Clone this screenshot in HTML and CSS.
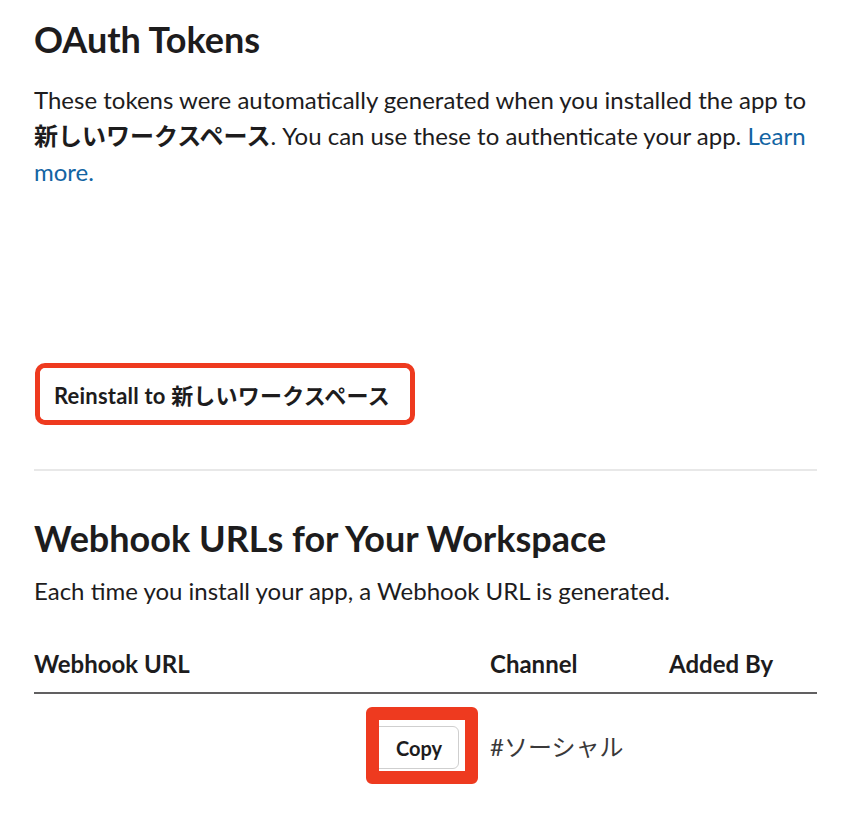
FILE: index.html
```html
<!DOCTYPE html>
<html lang="en">
<head>
<meta charset="utf-8">
<link rel="stylesheet" href="styles.css">
</head>
<body>
<main class="page">
  <section class="oauth">
    <h2 class="title">OAuth Tokens</h2>
    <p class="desc">These tokens were automatically generated when you installed the app to <strong>新しいワークスペース</strong>. You can use these to authenticate your app. <a class="link" href="#">Learn more.</a></p>
    <div class="reinstall-annot">
      <button class="btn reinstall">Reinstall to 新しいワークスペース</button>
    </div>
  </section>
  <hr class="divider">
  <section class="webhooks">
    <h2 class="title">Webhook URLs for Your Workspace</h2>
    <p class="desc">Each time you install your app, a Webhook URL is generated.</p>
    <table class="hooks">
      <colgroup><col class="c1"><col class="c2"><col class="c3"></colgroup>
      <thead>
        <tr><th>Webhook URL</th><th>Channel</th><th>Added By</th></tr>
      </thead>
      <tbody>
        <tr>
          <td class="url-cell"><div class="copy-annot"><button class="btn copy">Copy</button></div></td>
          <td class="channel">#ソーシャル</td>
          <td></td>
        </tr>
      </tbody>
    </table>
  </section>
</main>
</body>
</html>
```

FILE: styles.css
```css
html, body {
  margin: 0;
  padding: 0;
  background: #ffffff;
}
body {
  font-family: Lato, "Noto Sans CJK JP", sans-serif;
  color: #1d1c1d;
}
.page {
  padding: 16px 37px 0 34px;
}
.title {
  font-size: 36px;
  font-weight: 700;
  line-height: 46px;
  margin: 0;
}
.desc {
  font-size: 24px;
  line-height: 36px;
  margin: 0;
  color: #1d1c1d;
}
.oauth .desc {
  margin-top: 20px;
}
.desc strong {
  font-weight: 700;
}
.link {
  color: #1264a3;
  text-decoration: none;
}
.reinstall-annot {
  margin-top: 173px;
  display: inline-flex;
  border: 5px solid #ee3a1f;
  border-radius: 10px;
  margin-left: 1px;
}
.btn {
  font-family: Lato, "Noto Sans CJK JP", sans-serif;
  font-weight: 700;
  color: #1d1c1d;
  background: #ffffff;
  cursor: pointer;
}
.reinstall {
  font-size: 22px;
  height: 52px;
  padding: 0 20px 0 14px;
  border: none;
  border-radius: 6px;
  letter-spacing: 0.2px;
}
.divider {
  border: none;
  border-top: 2px solid #e8e8e8;
  margin: 44px 0 0 0;
}
.webhooks .title {
  margin-top: 44px;
}
.webhooks .desc {
  margin-top: 12px;
}
.hooks {
  width: 100%;
  table-layout: fixed;
  border-collapse: collapse;
  margin-top: 39px;
}
.c1 { width: 456px; }
.c2 { width: 179px; }
.hooks th {
  text-align: left;
  font-size: 24px;
  font-weight: 700;
  padding: 0 0 12px 0;
  line-height: 32px;
  border-bottom: 2px solid #616061;
}
.hooks td {
  padding: 13px 0 0 0;
  vertical-align: middle;
  font-size: 24px;
}
.url-cell {
  text-align: right;
  padding-right: 12px !important;
}
.copy-annot {
  display: inline-flex;
  border: 13px solid #ee3a1f;
  border-radius: 6px;
  background: #ffffff;
  overflow: hidden;
  width: 86px;
  height: 51px;
  box-sizing: content-box;
  align-items: flex-start;
  justify-content: flex-end;
  vertical-align: middle;
}
.copy {
  font-size: 20px;
  height: 43px;
  width: 90px;
  margin-right: 6px;
  margin-top: 6px;
  padding: 0 0 0 10px;
  border: 1.5px solid #cfcfcf;
  border-radius: 6px;
  flex-shrink: 0;
  box-sizing: border-box;
}
.channel {
  color: #3a393a;
}
```
